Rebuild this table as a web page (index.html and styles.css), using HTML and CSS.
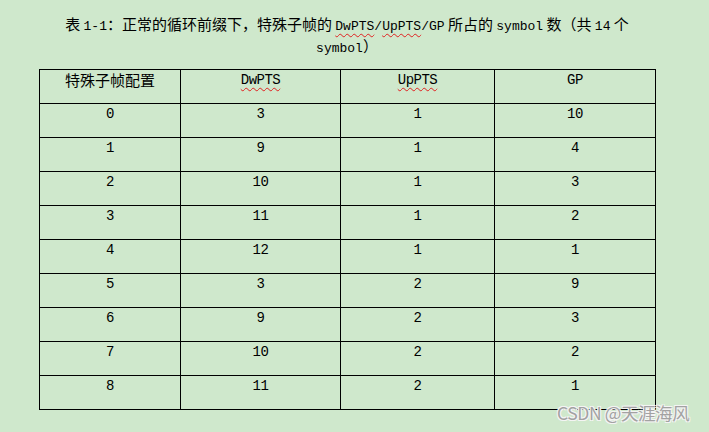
FILE: index.html
```html
<!DOCTYPE html>
<html lang="zh">
<head>
<meta charset="utf-8">
<title>表 1-1</title>
<link rel="stylesheet" href="styles.css">
</head>
<body>
<div class="page">
  <p class="caption">表 <span class="en">1-1</span>：正常的循环前缀下，特殊子帧的 <span class="en"><span class="spell">DwPTS</span>/<span class="spell">UpPTS</span>/GP</span> 所占的 <span class="en">symbol</span> 数（共 <span class="en">14</span> 个<br><span class="en">symbol</span>）</p>
  <table class="grid">
    <colgroup>
      <col class="c1"><col class="c2"><col class="c3"><col class="c4">
    </colgroup>
    <thead>
      <tr><th class="cjk">特殊子帧配置</th><th><span class="spell">DwPTS</span></th><th><span class="spell">UpPTS</span></th><th>GP</th></tr>
    </thead>
    <tbody>
      <tr><td>0</td><td>3</td><td>1</td><td>10</td></tr>
      <tr><td>1</td><td>9</td><td>1</td><td>4</td></tr>
      <tr><td>2</td><td>10</td><td>1</td><td>3</td></tr>
      <tr><td>3</td><td>11</td><td>1</td><td>2</td></tr>
      <tr><td>4</td><td>12</td><td>1</td><td>1</td></tr>
      <tr><td>5</td><td>3</td><td>2</td><td>9</td></tr>
      <tr><td>6</td><td>9</td><td>2</td><td>3</td></tr>
      <tr><td>7</td><td>10</td><td>2</td><td>2</td></tr>
      <tr><td>8</td><td>11</td><td>2</td><td>1</td></tr>
    </tbody>
  </table>
</div>
<div class="watermark">CSDN @天涯海风</div>
</body>
</html>
```

FILE: styles.css
```css
html, body {
  margin: 0;
  padding: 0;
  background: #cfe8cc;
}
body {
  width: 709px;
  height: 432px;
  overflow: hidden;
  position: relative;
  font-family: "Noto Sans CJK SC", sans-serif;
  color: #000;
}
.page {
  padding: 13px 0 0 39px;
  width: 616px;
}
.caption {
  margin: 0 0 8px 0;
  height: 48px;
  text-align: center;
  font-size: 15px;
  line-height: 22px;
}
.en {
  font-family: "Liberation Mono", monospace;
  font-size: 13px;
  line-height: 1;
}
.spell {
  text-decoration: underline wavy #e02020;
  text-decoration-thickness: 1px;
  text-underline-offset: 3px;
}
.grid {
  border-collapse: collapse;
  width: 616px;
  table-layout: fixed;
}
.c1 { width: 141px; }
.c2 { width: 160px; }
.c3 { width: 154px; }
.c4 { width: 161px; }
.grid tr {
  height: 34px;
}
.grid th, .grid td {
  border: 1px solid #000;
  padding: 0;
  vertical-align: top;
  text-align: center;
  font-weight: normal;
  font-family: "Liberation Mono", monospace;
  font-size: 14px;
  letter-spacing: -0.5px;
  line-height: 20px;
}
.grid th.cjk {
  font-family: "Noto Sans CJK SC", sans-serif;
  font-size: 15px;
  letter-spacing: 0;
}
.watermark {
  position: absolute;
  left: 557px;
  top: 401px;
  font-family: "Noto Sans CJK SC", sans-serif;
  font-size: 17.5px;
  line-height: 24px;
  color: #a2a2a2;
  text-shadow: 1px 1px 0 #f4f4f4, -1px -1px 0 #f4f4f4, 1px -1px 0 #f4f4f4, -1px 1px 0 #f4f4f4;
  letter-spacing: -0.4px;
}
```
